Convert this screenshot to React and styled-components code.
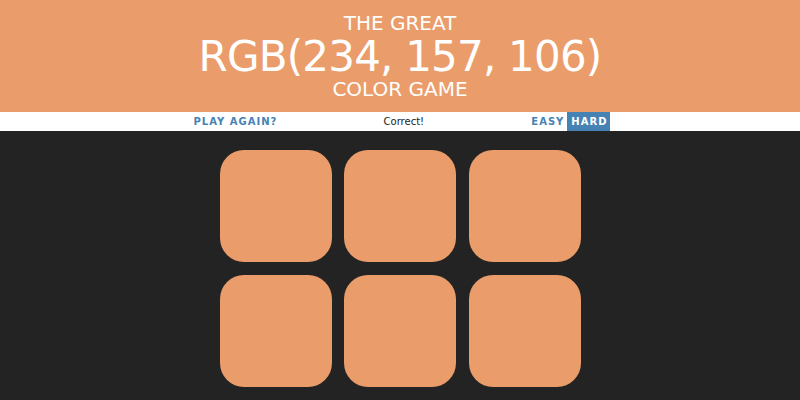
import React from "react";
import styled, { createGlobalStyle } from "styled-components";

const GlobalStyle = createGlobalStyle`
  html, body { margin: 0; padding: 0; }
  body {
    background: #232323;
    font-family: "DejaVu Sans", Verdana, sans-serif;
    width: 800px;
    height: 400px;
    overflow: hidden;
  }
`;

const COLOR = "rgb(234, 157, 106)";

const Header = styled.h1`
  margin: 0;
  height: 112px;
  box-sizing: border-box;
  padding-top: 12px;
  background: ${COLOR};
  color: #fff;
  font-weight: normal;
  text-align: center;
  text-transform: uppercase;
`;

const Line = styled.div`
  font-size: 20px;
  line-height: 23px;
  white-space: nowrap;
`;

const ColorDisplay = styled.div`
  font-size: 42px;
  line-height: 43px;
  letter-spacing: -0.8px;
  white-space: nowrap;
`;

const Stripe = styled.div`
  height: 19px;
  background: #fff;
  display: flex;
  justify-content: center;
  align-items: stretch;
`;

const Button = styled.button`
  border: none;
  margin: 0;
  padding: 0 3px 0 4px;
  background: ${(p) => (p.$selected ? "steelblue" : "#fff")};
  color: ${(p) => (p.$selected ? "#fff" : "steelblue")};
  font-family: "DejaVu Sans", Verdana, sans-serif;
  font-weight: bold;
  font-size: 10px;
  letter-spacing: 1px;
  text-transform: uppercase;
  line-height: 19px;
  cursor: pointer;
  outline: none;
`;

const Message = styled.span`
  width: 247px;
  text-align: center;
  font-size: 10px;
  line-height: 19px;
  color: #232323;
`;

const Grid = styled.div`
  width: 361px;
  margin: 19px auto 0;
  display: grid;
  grid-template-columns: repeat(3, 112px);
  grid-auto-rows: 112px;
  column-gap: 12.5px;
  row-gap: 13px;
`;

const Square = styled.div`
  background: ${(p) => p.$color};
  border-radius: 24px;
`;

export default function App() {
  const colors = Array(6).fill(COLOR);
  return (
    <>
      <GlobalStyle />
      <Header>
        <Line>The Great</Line>
        <ColorDisplay>RGB(234, 157, 106)</ColorDisplay>
        <Line>Color Game</Line>
      </Header>
      <Stripe>
        <Button>Play Again?</Button>
        <Message>Correct!</Message>
        <Button>Easy</Button>
        <Button $selected>Hard</Button>
      </Stripe>
      <Grid>
        {colors.map((c, i) => (
          <Square key={i} $color={c} />
        ))}
      </Grid>
    </>
  );
}
